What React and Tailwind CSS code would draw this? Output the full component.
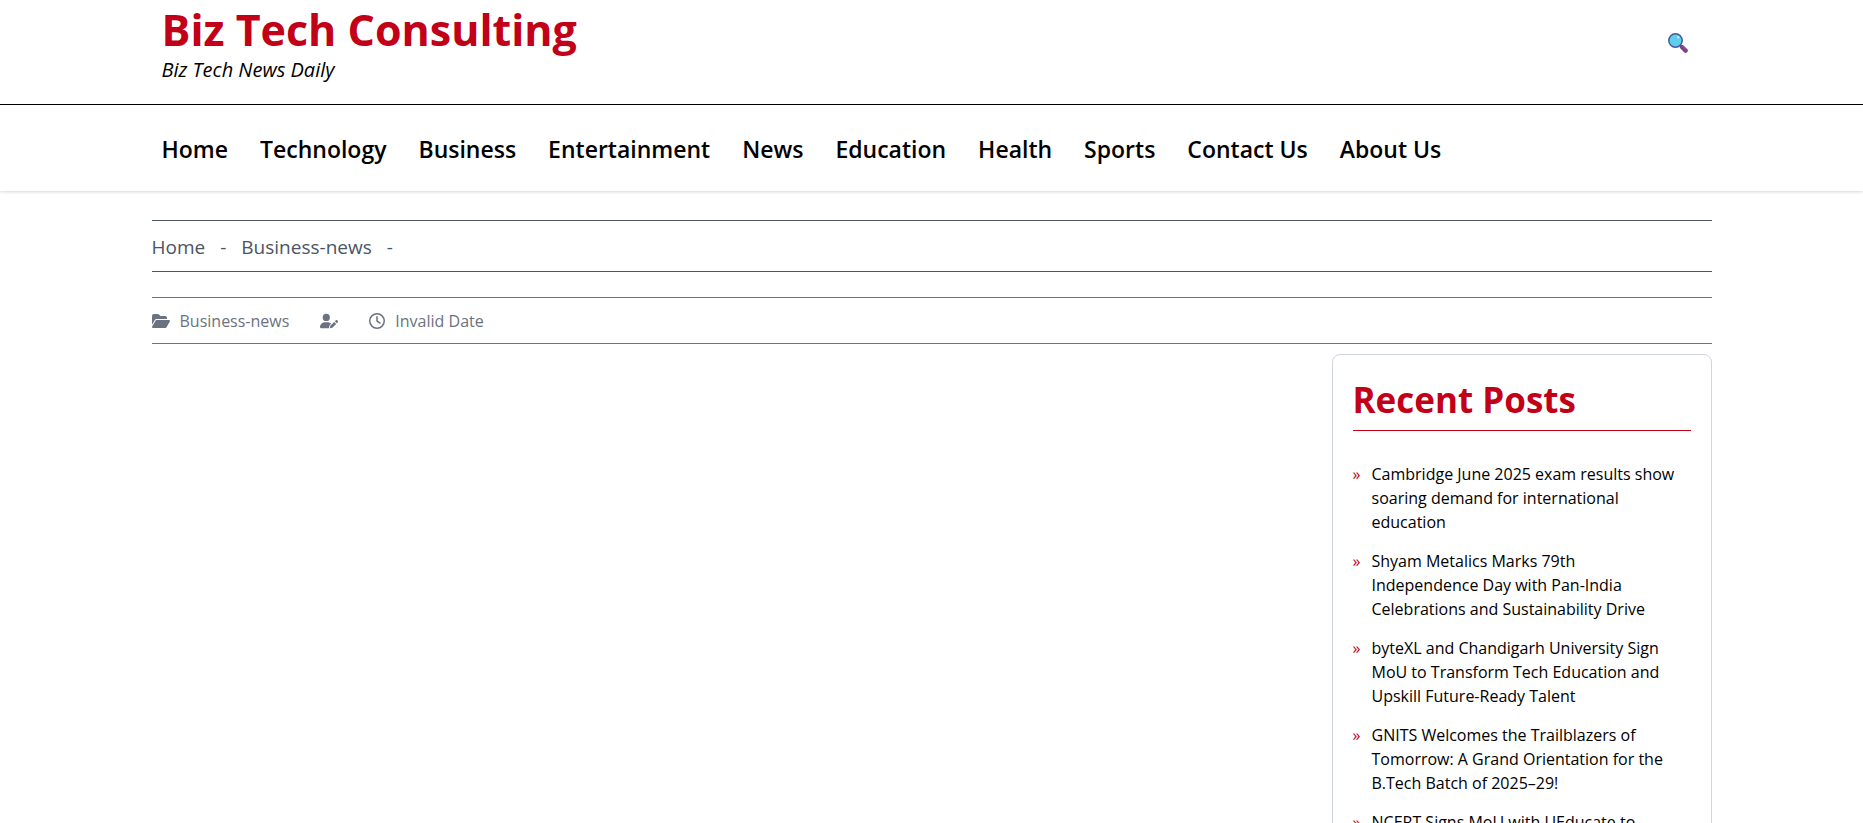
import { FaFolderOpen, FaUserPen, FaRegClock } from 'react-icons/fa6';

const NAV_LINKS = [
  'Home',
  'Technology',
  'Business',
  'Entertainment',
  'News',
  'Education',
  'Health',
  'Sports',
  'Contact Us',
  'About Us',
];

const RECENT_POSTS = [
  'Cambridge June 2025 exam results show soaring demand for international education',
  'Shyam Metalics Marks 79th Independence Day with Pan-India Celebrations and Sustainability Drive',
  'byteXL and Chandigarh University Sign MoU to Transform Tech Education and Upskill Future-Ready Talent',
  'GNITS Welcomes the Trailblazers of Tomorrow: A Grand Orientation for the B.Tech Batch of 2025–29!',
  'NCERT Signs MoU with UEducate to',
];

function SearchIcon() {
  return (
    <svg viewBox="0 0 20 20" className="w-5 h-5" aria-hidden="true">
      <path d="M11.6 11.6l2 2" stroke="#533566" strokeWidth="2" />
      <path d="M14 14l3.6 3.6" stroke="#7d4286" strokeWidth="4.4" strokeLinecap="round" />
      <path d="M14.8 13.2l3.4 3.4" stroke="#9a5a9c" strokeWidth="1" strokeLinecap="round" />
      <circle cx="7.5" cy="7.5" r="6.7" fill="#5fcdec" stroke="#46599c" strokeWidth="1.5" />
      <circle cx="10.2" cy="4.2" r="1.2" fill="#b9ecfa" />
    </svg>
  );
}

function Header() {
  return (
    <header className="shadow-[0_1px_3px_rgba(0,0,0,0.16)]">
      <div className="border-b border-black">
        <div className="max-w-[1560px] mx-auto h-[104px] px-[10px] flex justify-between items-start">
          <div>
            <h1 className="text-[43px] leading-[60px] font-bold text-[#c20017]">
              <a href="#home">Biz Tech Consulting</a>
            </h1>
            <p className="text-[20px] leading-[20px] italic">Biz Tech News Daily</p>
          </div>
          <button type="button" aria-label="Search" className="mt-[33px] mr-[14px] cursor-pointer">
            <SearchIcon />
          </button>
        </div>
      </div>
      <nav className="max-w-[1560px] mx-auto h-[86px] px-[10px] pt-[2px] flex items-center gap-8">
        {NAV_LINKS.map((label) => (
          <a key={label} href="#nav" className="text-[23px] leading-[32px] font-semibold whitespace-nowrap">
            {label}
          </a>
        ))}
      </nav>
    </header>
  );
}

function Breadcrumb() {
  return (
    <nav
      aria-label="Breadcrumb"
      className="mt-[29px] h-[52px] pt-[2px] border-y border-[#4b5563] text-[#4b5563] text-[19px] flex items-center gap-[15px]"
    >
      <a href="#home">Home</a>
      <span>-</span>
      <a href="#business">Business-news</a>
      <span>-</span>
    </nav>
  );
}

function PostMeta() {
  return (
    <div className="mt-[25px] h-[47px] border-y border-[#6b7280] text-[#6b7280] text-[16px] flex items-center gap-[31px]">
      <span className="flex items-center gap-[10px]">
        <FaFolderOpen className="size-[18px]" />
        Business-news
      </span>
      <FaUserPen className="size-[18px]" />
      <span className="flex items-center gap-[10px]">
        <FaRegClock className="size-[16px]" />
        Invalid Date
      </span>
    </div>
  );
}

function RecentPosts() {
  return (
    <aside className="w-[380px] mt-[10px] ml-auto p-5 border border-gray-300 rounded-lg">
      <h2 className="pt-[3px] pb-[9px] mb-[31px] border-b border-[#c20017] text-[35px] leading-[43px] font-bold text-[#c20017]">
        Recent Posts
      </h2>
      <ul className="flex flex-col gap-[15px]">
        {RECENT_POSTS.map((title) => (
          <li key={title} className="flex text-[16px] leading-[24px]">
            <span className="w-[19px] shrink-0 text-[#c20017]">»</span>
            <a href="#post" className="pr-2">{title}</a>
          </li>
        ))}
      </ul>
    </aside>
  );
}

export default function App() {
  return (
    <div className="h-screen overflow-hidden bg-white text-black font-['Segoe_UI','Open_Sans',sans-serif]">
      <Header />
      <main className="max-w-[1560px] mx-auto">
        <Breadcrumb />
        <PostMeta />
        <RecentPosts />
      </main>
    </div>
  );
}
